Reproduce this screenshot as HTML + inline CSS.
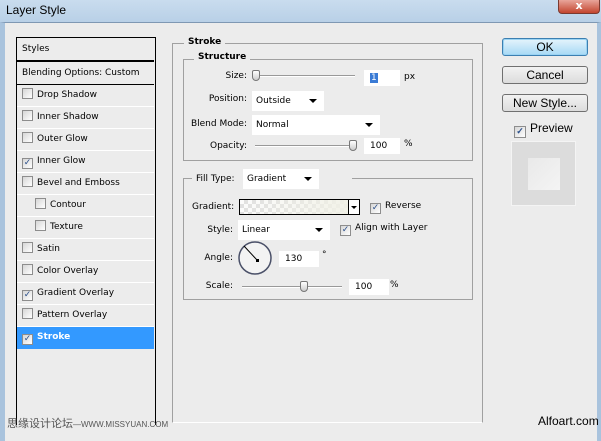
<!DOCTYPE html>
<html><head><style>
*{margin:0;padding:0;box-sizing:border-box}
body{width:601px;height:441px;overflow:hidden;font-family:"DejaVu Sans","Liberation Sans",sans-serif;font-size:9px;color:#000;position:relative;background:#ececec;white-space:nowrap}
.a{position:absolute}
.title{left:0;top:0;width:601px;height:24px;background:linear-gradient(#c9dcee,#b7cfe6);}
.frame{left:0;top:22px;width:601px;height:419px;background:#ececec;border-left:5px solid #a9c3dd;border-right:4px solid #a9c3dd;border-top:1px solid #7f98b3}
.row{position:absolute;left:17px;width:137px;height:22px;border-bottom:1px solid #fff;font-size:9px;line-height:21px;padding-left:5px}
.cb{display:inline-block;width:11px;height:11px;border:1px solid #8d8d8d;background:linear-gradient(135deg,#d6d6d6,#fff);vertical-align:-2px;margin-right:4px;font-size:9px;line-height:9px;text-align:center;color:#2a4f8a;font-weight:bold}
.lbl{position:absolute;text-align:right;font-size:9px}
.sel{position:absolute;background:#fff;font-size:9px;padding-left:4px;line-height:20px;height:20px}
.sel:after{content:"";position:absolute;right:7px;top:8px;border-left:4px solid transparent;border-right:4px solid transparent;border-top:4px solid #000}
.grp{position:absolute;border:1px solid #a0a0a0}
.leg{position:absolute;background:#ececec;font-weight:bold;padding:0 4px;font-size:9px}
.track{position:absolute;height:2px;border-top:1px solid #999;border-bottom:1px solid #fff}
.thumb{position:absolute;width:8px;height:11px;border:1px solid #777;border-radius:2px 2px 4px 4px;background:linear-gradient(#fff,#ccc)}
.inp{position:absolute;background:#fff;height:16px;font-size:9px;line-height:16px;padding-left:6px}
.btn{position:absolute;left:502px;width:86px;height:18px;border:1px solid #707070;border-radius:3px;background:linear-gradient(#f2f2f2,#dcdcdc);text-align:center;font-size:12px;line-height:16px;font-family:"Liberation Sans",sans-serif}
</style></head><body>
<div class="a title"></div>
<div class="a" style="left:6px;top:3px;font-family:'Liberation Sans',sans-serif;font-size:12px">Layer Style</div>
<div class="a" style="left:558px;top:0;width:42px;height:14px;background:linear-gradient(#e8a59a,#c3452f);border:1px solid #7a3a30;border-top:none;border-radius:0 0 4px 4px;color:#fff;font-size:11px;text-align:center;line-height:12px;font-weight:bold">x</div>
<div class="a frame"></div>

<div class="a" style="left:16px;top:37px;width:140px;height:388px;border:1px solid #000;border-bottom:none;background:#ececec"></div>
<div class="row" style="top:38px;height:24px;border-bottom:2px solid #000;line-height:22px">Styles</div>
<div class="row" style="top:63px;border-bottom:1px solid #000;line-height:21px">Blending Options: Custom</div>
<div class="row" style="top:85px"><span class="cb"></span>Drop Shadow</div>
<div class="row" style="top:107px"><span class="cb"></span>Inner Shadow</div>
<div class="row" style="top:129px"><span class="cb"></span>Outer Glow</div>
<div class="row" style="top:151px"><span class="cb">✓</span>Inner Glow</div>
<div class="row" style="top:173px"><span class="cb"></span>Bevel and Emboss</div>
<div class="row" style="top:195px;padding-left:18px"><span class="cb"></span>Contour</div>
<div class="row" style="top:217px;padding-left:18px"><span class="cb"></span>Texture</div>
<div class="row" style="top:239px"><span class="cb"></span>Satin</div>
<div class="row" style="top:261px"><span class="cb"></span>Color Overlay</div>
<div class="row" style="top:283px"><span class="cb">✓</span>Gradient Overlay</div>
<div class="row" style="top:305px"><span class="cb"></span>Pattern Overlay</div>
<div class="row" style="top:327px;background:#3399ff;color:#fff;font-weight:bold;border-bottom:none"><span class="cb">✓</span>Stroke</div>

<div class="grp" style="left:172px;top:43px;width:311px;height:380px;border-bottom:1px solid #fff"></div>
<div class="leg" style="left:184px;top:37px">Stroke</div>
<div class="grp" style="left:183px;top:59px;width:290px;height:102px"></div>
<div class="leg" style="left:194px;top:52px">Structure</div>
<div class="lbl" style="left:190px;top:71px;width:57px">Size:</div>
<div class="track" style="left:255px;top:75px;width:100px"></div>
<div class="thumb" style="left:252px;top:70px"></div>
<div class="inp" style="left:364px;top:70px;width:36px"><span style="background:#3a7bd5;color:#fff;padding:0 1px">1</span></div>
<div class="a" style="left:404px;top:72px">px</div>
<div class="lbl" style="left:190px;top:94px;width:57px">Position:</div>
<div class="sel" style="left:252px;top:91px;width:72px">Outside</div>
<div class="lbl" style="left:185px;top:119px;width:62px">Blend Mode:</div>
<div class="sel" style="left:252px;top:115px;width:128px">Normal</div>
<div class="lbl" style="left:190px;top:141px;width:57px">Opacity:</div>
<div class="track" style="left:255px;top:145px;width:100px"></div>
<div class="thumb" style="left:349px;top:140px"></div>
<div class="inp" style="left:364px;top:138px;width:36px">100</div>
<div class="a" style="left:404px;top:139px">%</div>

<div class="grp" style="left:183px;top:178px;width:290px;height:122px"></div>
<div class="a" style="left:192px;top:172px;width:160px;height:20px;background:#ececec"></div>
<div class="a" style="left:196px;top:174px">Fill Type:</div>
<div class="sel" style="left:243px;top:169px;width:76px">Gradient</div>
<div class="a" style="left:192px;top:202px">Gradient:</div>
<div class="a" style="left:239px;top:199px;width:121px;height:16px;border:1px solid #000;background:linear-gradient(90deg,rgba(236,236,236,.2),#f1f1e6),repeating-conic-gradient(#ddd 0 25%,#fff 0 50%) 0 0/8px 8px"></div>
<div class="a" style="left:348px;top:200px;width:11px;height:14px;background:#fff;border-left:1px solid #000"></div>
<div class="a" style="left:351px;top:206px;border-left:3px solid transparent;border-right:3px solid transparent;border-top:3px solid #000"></div>
<div class="a" style="left:370px;top:201px"><span class="cb">✓</span>Reverse</div>
<div class="lbl" style="left:190px;top:225px;width:43px">Style:</div>
<div class="sel" style="left:238px;top:220px;width:92px">Linear</div>
<div class="a" style="left:340px;top:223px"><span class="cb">✓</span>Align with Layer</div>
<div class="lbl" style="left:190px;top:253px;width:43px">Angle:</div>
<svg class="a" style="left:237px;top:240px" width="36" height="36"><circle cx="18" cy="18" r="16" fill="#f3f3f3" stroke="#4a5068" stroke-width="1.5"/><line x1="7" y1="6" x2="20" y2="20" stroke="#000"/><rect x="19" y="19" width="3" height="3"/></svg>
<div class="inp" style="left:279px;top:251px;width:40px">130</div>
<div class="a" style="left:322px;top:250px">°</div>
<div class="lbl" style="left:190px;top:281px;width:43px">Scale:</div>
<div class="track" style="left:242px;top:286px;width:100px"></div>
<div class="thumb" style="left:300px;top:281px"></div>
<div class="inp" style="left:349px;top:279px;width:40px">100</div>
<div class="a" style="left:390px;top:280px">%</div>

<div class="btn" style="top:38px;border-color:#3c7fb1;background:linear-gradient(#e5f4fc,#a7d9f5);box-shadow:0 0 0 1px #9ad3f3 inset">OK</div>
<div class="btn" style="top:66px">Cancel</div>
<div class="btn" style="top:94px">New Style...</div>
<div class="a" style="left:514px;top:121px;font-size:12px;font-family:'Liberation Sans',sans-serif"><span class="cb" style="width:12px;height:12px">✓</span>Preview</div>
<div class="a" style="left:511px;top:141px;width:65px;height:65px;background:#dcdcdc;border:1px solid #f4f4f4"></div>
<div class="a" style="left:528px;top:158px;width:32px;height:32px;background:linear-gradient(135deg,#e9e9e9,#f4f4f4)"></div>

<div class="a" style="left:7px;top:415px;font-family:'Liberation Sans','Noto Sans CJK SC',sans-serif;font-size:11px;color:#555">思缘设计论坛<span style="font-size:8px">—WWW.MISSYUAN.COM</span></div>
<div class="a" style="left:538px;top:414px;font-family:'Liberation Sans',sans-serif;font-size:12px">Alfoart.com</div>
</body></html>
